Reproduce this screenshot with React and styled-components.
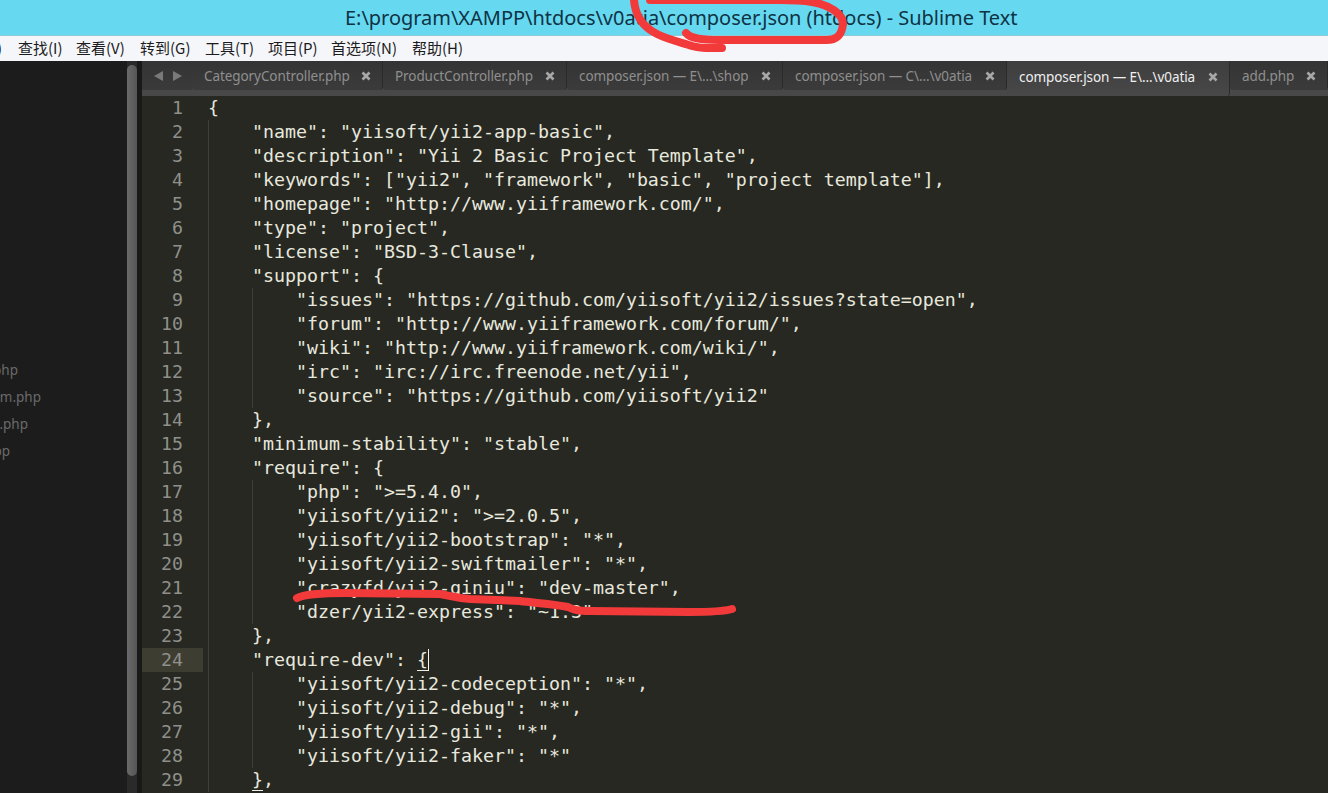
import React from "react";
import styled, { createGlobalStyle } from "styled-components";

const Global = createGlobalStyle`
  html, body { margin: 0; padding: 0; background: #272822; overflow: hidden; }
`;

const Win = styled.div`
  position: relative;
  width: 1328px;
  height: 793px;
  display: flex;
  flex-direction: column;
  overflow: hidden;
`;

const TitleBar = styled.div`
  height: 36px;
  flex: none;
  background: #66d9f1;
  box-shadow: inset 0 -1px 0 #8fc9d8;
  color: #0f3344;
  font: 20px/35px "Noto Sans", "Open Sans", sans-serif;
  letter-spacing: -0.03px;
  padding-left: 345px;
  white-space: nowrap;
`;

const MenuBar = styled.div`
  height: 25px;
  flex: none;
  position: relative;
  display: flex;
  background: #f5f6fa;
  color: #1c1c1c;
  font: 15px/24px "Noto Sans CJK SC", "Noto Sans", sans-serif;
  white-space: nowrap;
  padding-left: 18px;
`;

const MenuItem = styled.span`
  flex: none;
  width: ${(p) => p.$w}px;
`;

const CutParen = styled.span`
  position: absolute;
  left: -3px;
  top: 0;
`;

const Workspace = styled.div`
  flex: 1;
  min-height: 0;
  display: flex;
`;

const Sidebar = styled.div`
  width: 127px;
  flex: none;
  background: #1c1c1c;
  padding-top: 296px;
  overflow: hidden;
  box-sizing: border-box;
`;

const SideRow = styled.div`
  height: 27px;
  width: ${(p) => p.$end}px;
  display: flex;
  justify-content: flex-end;
  color: #6a6a6a;
  font: 13.5px/27px "Noto Sans", sans-serif;
  white-space: nowrap;
`;

const ScrollTrack = styled.div`
  width: 15px;
  flex: none;
  background: linear-gradient(90deg, #2a2a2a 0 10px, #191919 10px);
  padding-top: 4px;
  box-sizing: border-box;
`;

const ScrollThumb = styled.div`
  width: 10px;
  height: 711px;
  border-radius: 5px;
  background: linear-gradient(90deg, #6a6a6a, #555);
`;

const Editor = styled.div`
  flex: 1;
  min-width: 0;
  display: flex;
  flex-direction: column;
  background: #272822;
`;

const TabBar = styled.div`
  height: 35px;
  flex: none;
  display: flex;
  background: #484848;
  overflow: hidden;
`;

const Arrows = styled.div`
  width: 50px;
  height: 29px;
  flex: none;
  display: flex;
  align-items: center;
  padding: 1px 0 0 11px;
  gap: 8px;
  box-sizing: border-box;
  background: linear-gradient(#343434, #3a3a3a);
`;

const Tab = styled.div`
  flex: none;
  width: ${(p) => p.$w}px;
  height: ${(p) => (p.$active ? 35 : 29)}px;
  box-sizing: border-box;
  display: flex;
  align-items: center;
  justify-content: space-between;
  padding: ${(p) => (p.$active ? "1px 11px 5px 12px" : "1px 11px 0 12px")};
  border-right: 1px solid #2a2a2a;
  border-radius: 0 0 3px 3px;
  background: ${(p) =>
    p.$active ? "linear-gradient(#3e3e3e, #484848)" : "linear-gradient(#343434, #3b3b3b)"};
  color: ${(p) => (p.$active ? "#f0f0f0" : "#8f8f8f")};
  font: 13.5px/28px "Noto Sans", sans-serif;
  letter-spacing: -0.08px;
  white-space: nowrap;
`;

const Close = styled.svg`
  width: 10px;
  height: 10px;
  flex: none;
`;

const Code = styled.div`
  flex: 1;
  min-height: 0;
  display: flex;
  overflow: hidden;
  font: 18.27px/24px "DejaVu Sans Mono", "Liberation Mono", monospace;
`;

const Gutter = styled.div`
  width: 61px;
  flex: none;
  color: #8f908a;
  text-align: right;
`;

const LineNo = styled.div`
  height: 24px;
  padding-right: 20px;
  background: ${(p) => (p.$current ? "#3e3d32" : "transparent")};
`;

const Lines = styled.div`
  flex: 1;
  min-width: 0;
  padding-left: 5px;
  color: #e8e8de;
  white-space: pre;
`;

const Line = styled.div`
  height: 24px;
  position: relative;
`;

const Guide = styled.span`
  position: absolute;
  top: 0;
  bottom: 0;
  left: ${(p) => p.$at * 11}px;
  width: 1px;
  background: #3f403a;
`;

const Match = styled.span`
  border-bottom: 1px solid #f0f0e8;
`;

const Caret = styled.span`
  display: inline-block;
  width: 1px;
  height: 22px;
  margin: 0 -1px 0 0;
  vertical-align: -5px;
  background: #f8f8f2;
`;

const Ink = styled.svg`
  position: absolute;
  inset: 0;
  width: 1328px;
  height: 793px;
  pointer-events: none;
`;

const menu = [
  ["查找(I)", 58],
  ["查看(V)", 64],
  ["转到(G)", 65],
  ["工具(T)", 63],
  ["项目(P)", 63],
  ["首选项(N)", 81],
  ["帮助(H)", 60],
];

const tabs = [
  ["CategoryController.php", 191],
  ["ProductController.php", 184],
  ["composer.json — E\\...\\shop", 216],
  ["composer.json — C\\...\\v0atia", 224],
  ["composer.json — E\\...\\v0atia", 223, true],
  ["add.php", 98],
];

const code = [
  `{`,
  `    "name": "yiisoft/yii2-app-basic",`,
  `    "description": "Yii 2 Basic Project Template",`,
  `    "keywords": ["yii2", "framework", "basic", "project template"],`,
  `    "homepage": "http://www.yiiframework.com/",`,
  `    "type": "project",`,
  `    "license": "BSD-3-Clause",`,
  `    "support": {`,
  `        "issues": "https://github.com/yiisoft/yii2/issues?state=open",`,
  `        "forum": "http://www.yiiframework.com/forum/",`,
  `        "wiki": "http://www.yiiframework.com/wiki/",`,
  `        "irc": "irc://irc.freenode.net/yii",`,
  `        "source": "https://github.com/yiisoft/yii2"`,
  `    },`,
  `    "minimum-stability": "stable",`,
  `    "require": {`,
  `        "php": ">=5.4.0",`,
  `        "yiisoft/yii2": ">=2.0.5",`,
  `        "yiisoft/yii2-bootstrap": "*",`,
  `        "yiisoft/yii2-swiftmailer": "*",`,
  `        "crazyfd/yii2-qiniu": "dev-master",`,
  `        "dzer/yii2-express": "~1.3"`,
  `    },`,
  null,
  `        "yiisoft/yii2-codeception": "*",`,
  `        "yiisoft/yii2-debug": "*",`,
  `        "yiisoft/yii2-gii": "*",`,
  `        "yiisoft/yii2-faker": "*"`,
  null,
];

const guides = (n) => {
  if (n === 1) return [];
  const inner = (n >= 9 && n <= 13) || (n >= 17 && n <= 22) || (n >= 25 && n <= 28);
  return inner ? [0, 4] : [0];
};

const renderLine = (text, i) => {
  if (i === 23)
    return (
      <>
        {`    "require-dev": `}
        <Match>{"{"}</Match>
        <Caret />
      </>
    );
  if (i === 28)
    return (
      <>
        {"    "}
        <Match>{"}"}</Match>,
      </>
    );
  return text;
};

export default function App() {
  return (
    <Win>
      <Global />
      <TitleBar>E:\program\XAMPP\htdocs\v0atia\composer.json (htdocs) - Sublime Text</TitleBar>
      <MenuBar>
        <CutParen>)</CutParen>
        {menu.map(([t, w]) => (
          <MenuItem key={t} $w={w}>{t}</MenuItem>
        ))}
      </MenuBar>
      <Workspace>
        <Sidebar>
          <SideRow $end={18}>php</SideRow>
          <SideRow $end={41}>form.php</SideRow>
          <SideRow $end={28}>x.php</SideRow>
          <SideRow $end={10}>app</SideRow>
        </Sidebar>
        <ScrollTrack>
          <ScrollThumb />
        </ScrollTrack>
        <Editor>
          <TabBar>
            <Arrows>
              <svg width="11" height="12" viewBox="0 0 11 12"><path d="M10 1v10L1 6z" fill="#7a7a7a" /></svg>
              <svg width="11" height="12" viewBox="0 0 11 12"><path d="M1 1v10l9-5z" fill="#7a7a7a" /></svg>
            </Arrows>
            {tabs.map(([t, w, a]) => (
              <Tab key={t} $w={w} $active={a}>
                <span>{t}</span>
                <Close viewBox="0 0 10 10">
                  <path d="M1.5 1.5l7 7M8.5 1.5l-7 7" stroke="#a8a8a8" strokeWidth="2.6" />
                </Close>
              </Tab>
            ))}
          </TabBar>
          <Code>
            <Gutter>
              {code.map((_, i) => (
                <LineNo key={i} $current={i === 23}>{i + 1}</LineNo>
              ))}
            </Gutter>
            <Lines>
              {code.map((t, i) => (
                <Line key={i}>
                  {guides(i + 1).map((g) => (
                    <Guide key={g} $at={g} />
                  ))}
                  {renderLine(t, i)}
                </Line>
              ))}
            </Lines>
          </Code>
        </Editor>
      </Workspace>
      <Ink viewBox="0 0 1328 793" fill="none" stroke="#f23a3a" strokeLinecap="round" strokeLinejoin="round">
        <path
          strokeWidth="8"
          d="M634 0C635 14 641 26 657 34C669 40 684 43 692 46C702 49 712 48 722 48"
        />
        <path
          strokeWidth="8"
          d="M686 33C690 38 700 40 720 40L826 40C838 40 842 34 843 24C843 14 830 5 812 2C800 0 790 0 780 0L650 0"
        />
        <path
          strokeWidth="8"
          d="M297 598C305 594 320 593 345 593L440 594C450 596 456 598 470 599L520 601C535 603 555 604 568 607C574 610 578 611 590 611L690 612C710 612 725 611 732 609"
        />
      </Ink>
    </Win>
  );
}
